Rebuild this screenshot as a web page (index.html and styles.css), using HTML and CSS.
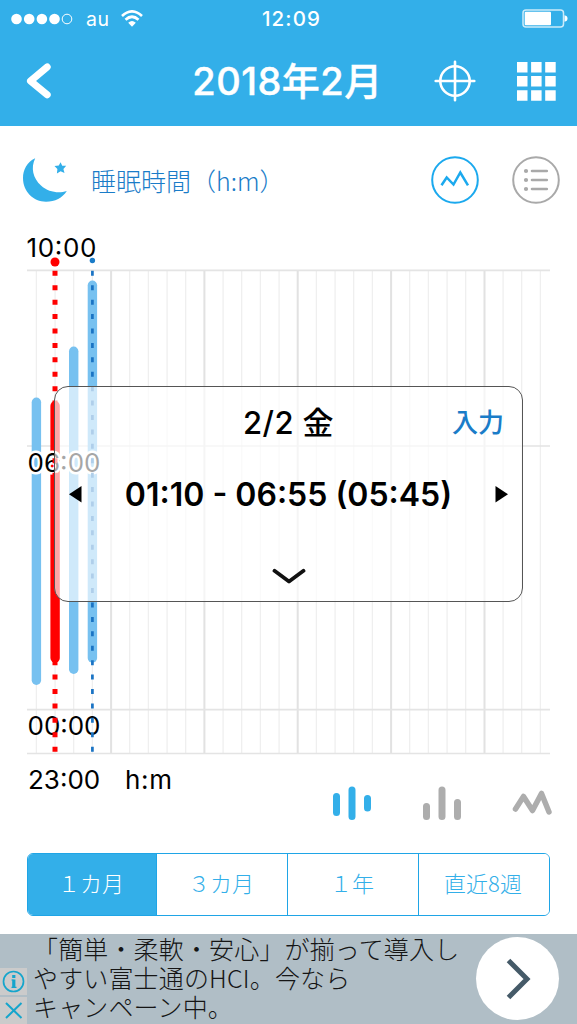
FILE: index.html
```
<!DOCTYPE html>
<html lang="ja">
<head>
    <meta charset="UTF-8">
    <meta name="viewport" content="width=device-width, initial-scale=1.0">
    <title>睡眠時間</title>
    <link rel="stylesheet" href="styles.css">
</head>
<body>
    <header class="header">
        <div class="status-bar">
            <div class="carrier">
                <svg width="62" height="12" viewBox="0 0 62 12" fill="#fff">
                    <circle cx="5.5" cy="6" r="5.3"/>
                    <circle cx="18.2" cy="6" r="5.3"/>
                    <circle cx="30.9" cy="6" r="5.3"/>
                    <circle cx="43.5" cy="6" r="5.3"/>
                    <circle cx="56" cy="6" r="4.8" fill="none" stroke="#fff"/>
                </svg>
                <span class="carrier-name">au</span>
                <svg width="22" height="17" viewBox="0 0 22 17" fill="none" stroke="#fff" stroke-width="2.7">
                    <path d="M1 6Q11-3.2 21 6"/>
                    <path d="M4.5 9.7Q11 3.8 17.5 9.7"/>
                    <path d="M7.2 12.7Q11 9.2 14.8 12.7L11 16.8z" fill="#fff" stroke="none"/>
                </svg>
            </div>
            <span class="clock">12:09</span>
            <svg class="battery" width="46" height="20" viewBox="0 0 46 20">
                <rect x="1" y="1" width="40.5" height="17" rx="3" fill="none" stroke="#fff" stroke-opacity=".75" stroke-width="1.5"/>
                <rect x="2.7" y="2.8" width="26.3" height="13.4" rx="1" fill="#fff"/>
                <path d="M42.5 6.2q3 .6 3 3.3t-3 3.3z" fill="#fff"/>
            </svg>
        </div>
        <div class="nav-bar">
            <svg class="back-icon" width="26" height="36" viewBox="0 0 26 36" fill="none" stroke="#fff" stroke-width="7" stroke-linecap="round" stroke-linejoin="round">
                <path d="M21.2 4L4.5 18L21.2 31.8"/>
            </svg>
            <h1>2018年2月</h1>
            <div class="nav-actions">
                <svg width="42" height="42" viewBox="0 0 42 42" fill="none" stroke="#fff" stroke-width="2.6" stroke-linecap="round">
                    <circle cx="21" cy="21" r="14.7"/>
                    <path d="M21 1.7V40.3M1.7 21H40.3"/>
                </svg>
                <svg width="39" height="39" viewBox="0 0 39 39" fill="#fff">
                    <path d="M0 0h10.5v10.5H0zM14.1 0h10.5v10.5H14.1zM28.2 0h10.5v10.5H28.2zM0 14.1h10.5v10.5H0zM14.1 14.1h10.5v10.5H14.1zM28.2 14.1h10.5v10.5H28.2zM0 28.2h10.5v10.5H0zM14.1 28.2h10.5v10.5H14.1zM28.2 28.2h10.5v10.5H28.2z"/>
                </svg>
            </div>
        </div>
    </header>

    <main>
        <div class="title-row">
            <svg class="moon" width="46" height="46" viewBox="0 0 46 46" fill="#33afe9">
                <path d="M13.2 1.2C5 5 1 13 1 21C1 34.500 11.500 44.700 24 44.700C33 44.700 40.500 41 44.800 34C37 36.500 26.500 35.500 19 28.500C11 21 8.500 11 13.200 1.200z"/>
                <path d="M38.600 5.200l1.600 3.600 4 0-2.800 3.100 1.100 4.100-3.900-1.700-3.700 2.100.5-4.300-2.900-3 4.300-.6z"/>
            </svg>
            <h2>睡眠時間（h:m）</h2>
            <div class="view-toggle">
                <svg width="48" height="48" viewBox="0 0 48 48" fill="none" stroke="#1ba9ee" stroke-width="2">
                    <circle cx="24" cy="24" r="22.800"/>
                    <path d="M10.500 29.300L15.700 21.500L22.500 28.500L29.300 16.500L37 29.300" stroke-width="2.500"/>
                </svg>
                <svg width="48" height="48" viewBox="0 0 48 48" fill="none" stroke="#a9a9a9" stroke-width="2">
                    <circle cx="24" cy="24" r="22.800"/>
                    <path d="M20 15H34.800M20 24H34.800M20 33H34.800" stroke-width="2.600" stroke-linecap="round"/>
                    <path d="M14 15h.01M14 24h.01M14 33h.01" stroke-width="4.200" stroke-linecap="round"/>
                </svg>
            </div>
        </div>

        <div class="chart">
            <svg class="plot" width="577" height="530" viewBox="0 234 577 530">
                <!-- day lines -->
                <path class="grid-minor" d="M36.400 270V753M55.100 270V753M73.700 270V753M92.400 270V753M129.700 270V753M148.400 270V753M167.100 270V753M185.700 270V753M223.100 270V753M241.700 270V753M260.400 270V753M279.100 270V753M316.400 270V753M335.100 270V753M353.700 270V753M372.400 270V753M409.700 270V753M428.400 270V753M447.100 270V753M465.700 270V753M503.100 270V753M521.700 270V753M540.400 270V753"/>
                <path class="grid-major" d="M111.100 270V753M204.400 270V753M297.700 270V753M391.100 270V753M484.500 270V753"/>
                <!-- hour lines -->
                <path class="grid-hour" d="M27 270.400H550M27 446H550M27 709.600H550M27 753.500H550"/>

                <g class="bars">
                    <rect x="31.700" y="397.500" width="9.400" height="287.500" rx="4.700"/>
                    <rect class="selected" x="50.400" y="401" width="9.400" height="261.700" rx="4.700"/>
                    <rect x="69" y="346.500" width="9.400" height="327.500" rx="4.700"/>
                    <rect x="87.700" y="280.500" width="9.400" height="382.200" rx="4.700"/>
                </g>

                <text x="26.500" y="257" textLength="70">10:00</text>
                <text class="outlined" x="27.500" y="472" textLength="73">06:00</text>
                <text x="27.500" y="735" textLength="73">00:00</text>

                <path class="marker-red" d="M55 270.800V753"/>
                <circle cx="55" cy="262" r="4.500" fill="#f00"/>
                <path class="marker-blue" d="M92.400 270.800V753"/>
                <circle cx="92.400" cy="260.500" r="2.700" fill="#1a7cc8"/>
            </svg>

            <div class="popup">
                <div class="popup-head">
                    <span class="popup-date">2/2 金</span>
                    <a href="#" class="popup-edit">入力</a>
                </div>
                <div class="popup-time">
                    <svg width="13" height="17" viewBox="0 0 13 17"><path d="M12.500 0V16.500L0 8.200z"/></svg>
                    <span>01:10 - 06:55 (05:45)</span>
                    <svg width="13" height="17" viewBox="0 0 13 17"><path d="M.5 0V16.500L13 8.200z"/></svg>
                </div>
                <svg class="popup-close" width="34" height="16" viewBox="0 0 34 16" fill="none" stroke="#111" stroke-width="3.800" stroke-linecap="round" stroke-linejoin="round">
                    <path d="M2.500 2.800L17 13.500L31.500 2.800"/>
                </svg>
            </div>
        </div>

        <div class="chart-footer">
            <span class="axis-min">23:00</span>
            <span class="axis-unit">h:m</span>
            <div class="chart-types">
                <svg width="40" height="36" viewBox="0 0 40 36" fill="none" stroke="#33afe9" stroke-width="7" stroke-linecap="round">
                    <path d="M4.500 11.500V27.500M20 5V31.500M35.500 13.500V23"/>
                </svg>
                <svg width="40" height="36" viewBox="0 0 40 36" fill="none" stroke="#adadad" stroke-width="7" stroke-linecap="round">
                    <path d="M4.500 21.500V31.500M20 5V31.500M35.500 17.500V31.500"/>
                </svg>
                <svg width="40" height="36" viewBox="0 0 40 36" fill="none" stroke="#adadad" stroke-width="5.500" stroke-linecap="round" stroke-linejoin="round">
                    <path d="M3.500 24L11.500 11.500L20.500 25.500L29.500 8.500L37 27"/>
                </svg>
            </div>
        </div>

        <div class="range-tabs">
            <button class="active">１カ月</button>
            <button>３カ月</button>
            <button>１年</button>
            <button>直近8週</button>
        </div>
    </main>

    <footer class="ad">
        <div class="ad-badges">
            <svg width="27" height="27" viewBox="0 0 27 27" fill="none" stroke="#15a5cc">
                <circle cx="13.500" cy="13.500" r="10" stroke-width="1.700"/>
                <path d="M11.500 12h2M11.500 19.300h5" stroke-width="1.200"/>
                <path d="M13.800 11.500V19.900M13.800 7V9.900" stroke-width="3.200"/>
            </svg>
            <svg width="27" height="27" viewBox="0 0 27 27" fill="none" stroke="#15a5cc" stroke-width="2">
                <path d="M6 6L21.500 21M21.500 6L6 21"/>
            </svg>
        </div>
        <p>「簡単・柔軟・安心」が揃って導入し<br>やすい富士通のHCI。今なら<br>キャンペーン中。</p>
        <div class="ad-arrow">
            <svg width="26" height="42" viewBox="0 0 26 42" fill="none" stroke="#455a68" stroke-width="5">
                <path d="M2.500 2.500L21 21L2.500 39.500"/>
            </svg>
        </div>
    </footer>
</body>
</html>
```
FILE: styles.css
```
* {
    margin: 0;
    padding: 0;
    box-sizing: border-box;
}

:root {
    --blue: #33afe9;
    --link-blue: #1a7cc8;
    --border-blue: #1fa5e6;
}

body {
    width: 577px;
    height: 1024px;
    background: white;
    color: #000;
    font-family: Inter, "Noto Sans CJK JP", sans-serif;
    overflow: hidden;
}

svg {
    display: block;
    flex-shrink: 0;
}

.header {
    height: 126px;
    background: var(--blue);
    color: white;
}

.status-bar {
    display: grid;
    grid-template-columns: 1fr auto 1fr;
    align-items: center;
    height: 37px;
    padding: 0 9px 0 11px;
}

.carrier {
    display: flex;
    align-items: center;
}

.carrier-name {
    margin: 0 11px 0 13px;
    font-size: 19.5px;
    line-height: 24px;
    letter-spacing: 0.6px;
}

.clock {
    margin-left: 4px;
    font-size: 20.5px;
    font-weight: 500;
    letter-spacing: 1.1px;
}

.battery {
    justify-self: end;
}

.nav-bar {
    display: grid;
    grid-template-columns: 1fr auto 1fr;
    align-items: center;
    height: 88px;
    padding: 0 21px 0 26px;
}

h1 {
    margin-right: 7px;
    font-size: 38px;
    font-weight: 500;
    line-height: 44px;
    letter-spacing: 0.5px;
    white-space: nowrap;
    -webkit-text-stroke: 0.4px white;
}

.nav-actions {
    display: flex;
    align-items: center;
    justify-content: flex-end;
    gap: 41px;
}

.title-row {
    display: flex;
    align-items: center;
    height: 108px;
    padding: 0 17px 0 22px;
}

h2 {
    margin-left: 23px;
    color: var(--link-blue);
    font-family: "Noto Sans CJK JP", sans-serif;
    font-size: 25px;
    font-weight: 300;
}

.view-toggle {
    display: flex;
    gap: 33px;
    margin-left: auto;
}

.chart {
    position: relative;
    height: 530px;
}

.plot {
    overflow: visible;
}

.grid-minor {
    stroke: #efefef;
    stroke-width: 1.3;
}

.grid-major {
    stroke: #e2e2e2;
    stroke-width: 2;
}

.grid-hour {
    stroke: #e4e4e4;
    stroke-width: 1.7;
}

.bars {
    fill: #77c1f0;
}

.bars .selected {
    fill: #f00;
}

.chart text {
    font-size: 26px;
    font-weight: 370;
}

.chart .outlined {
    stroke: white;
    stroke-width: 5px;
    stroke-linejoin: round;
    paint-order: stroke;
}

.marker-red {
    stroke: #f00;
    stroke-width: 5;
    stroke-dasharray: 5 9.42;
}

.marker-blue {
    stroke: #1a73c4;
    stroke-width: 2.7;
    stroke-dasharray: 5 9.42;
}

.popup {
    position: absolute;
    left: 54px;
    top: 152px;
    width: 469px;
    height: 216px;
    padding: 0 14px;
    background: rgba(255, 255, 255, 0.65);
    border: 1px solid #555;
    border-radius: 14px;
}

.popup-head {
    display: grid;
    grid-template-columns: 1fr auto 1fr;
    align-items: center;
    height: 66px;
    padding: 0 4px;
}

.popup-date {
    grid-column: 2;
    font-size: 31px;
    font-weight: 500;
    letter-spacing: 0.4px;
}

.popup-edit {
    justify-self: end;
    color: var(--link-blue);
    font-size: 26px;
    font-weight: 500;
    text-decoration: none;
}

.popup-time {
    display: flex;
    align-items: center;
    justify-content: space-between;
    height: 82px;
    font-size: 32px;
    font-weight: 600;
}

.popup-close {
    margin: 33px auto 0;
}

.chart-footer {
    display: flex;
    height: 89px;
    padding: 0 25px 0 28px;
    font-size: 26px;
    font-weight: 370;
    line-height: 31px;
}

.axis-min {
    width: 97px;
}

.axis-unit {
    letter-spacing: 0.7px;
}

.chart-types {
    display: flex;
    gap: 50px;
    margin: 21px 0 0 auto;
}

.range-tabs {
    display: flex;
    height: 63px;
    margin: 0 27px;
    border: 1.5px solid var(--border-blue);
    border-radius: 6px;
    overflow: hidden;
}

.range-tabs button {
    flex: 1;
    padding-right: 2px;
    padding-bottom: 5px;
    border: none;
    border-left: 1px solid var(--border-blue);
    background: white;
    color: var(--blue);
    font-family: "Noto Sans CJK JP", sans-serif;
    font-size: 22px;
    font-weight: 300;
}

.range-tabs button:first-child {
    flex: 0 0 128px;
    border-left: none;
}

.range-tabs .active {
    background: var(--blue);
    color: white;
}

.ad {
    display: flex;
    height: 90px;
    margin-top: 18px;
    background: #b0bec6;
}

.ad-badges {
    display: flex;
    flex-direction: column;
    gap: 2px;
    margin-top: 34px;
}

.ad-badges svg {
    background: #cbcbcb;
}

.ad p {
    margin-left: 6px;
    color: #151515;
    font-family: "Noto Sans CJK JP", sans-serif;
    font-size: 25px;
    font-weight: 300;
    line-height: 29px;
    letter-spacing: 0.15px;
    white-space: nowrap;
}

.ad-arrow {
    display: flex;
    align-items: center;
    justify-content: center;
    width: 83px;
    height: 83px;
    margin: 3px 18px 0 auto;
    padding-left: 3px;
    border-radius: 50%;
    background: white;
}
```
